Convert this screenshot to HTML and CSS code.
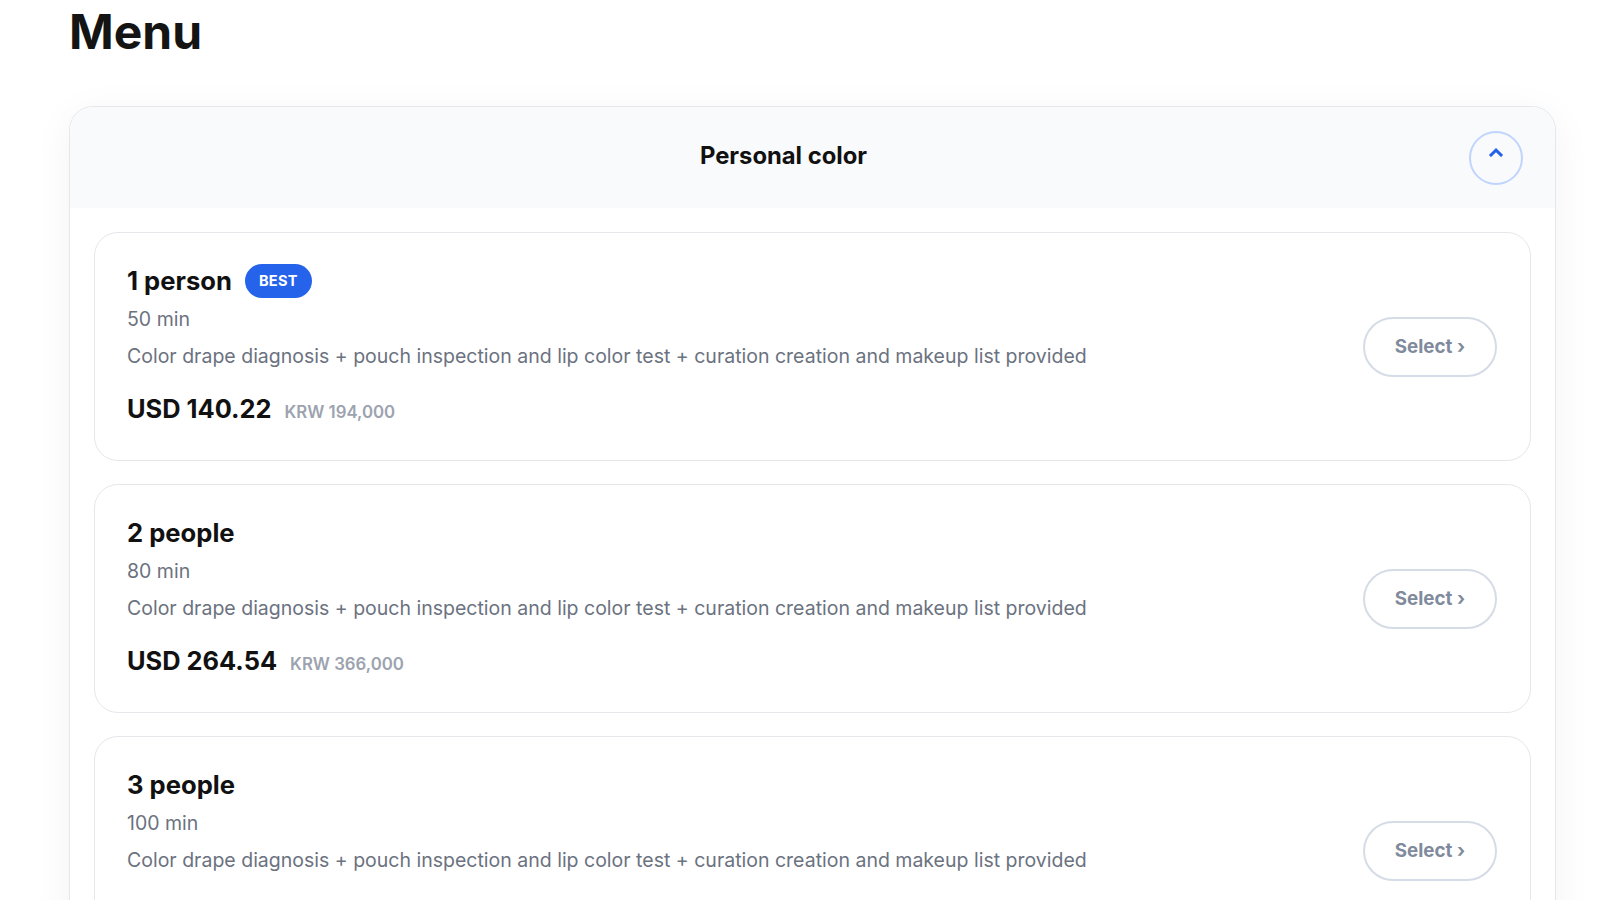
FILE: index.html
```html
<!DOCTYPE html>
<html lang="en">
<head>
<meta charset="utf-8">
<title>Menu</title>
<link rel="stylesheet" href="styles.css">
</head>
<body>
<main class="page">
  <h1 class="page-title">Menu</h1>

  <section class="category">
    <header class="category-head">
      <h2 class="category-title">Personal color</h2>
      <button class="collapse-btn" type="button" aria-label="Collapse">
        <svg width="14" height="9" viewBox="0 0 14 9" aria-hidden="true">
          <polyline points="2,7 7,2.2 12,7" fill="none" stroke="#2563eb" stroke-width="3" stroke-linecap="square" stroke-linejoin="miter"/>
        </svg>
      </button>
    </header>

    <div class="options">
      <article class="option">
        <div class="option-info">
          <div class="option-name-row">
            <h3 class="option-name">1 person</h3>
            <span class="badge">BEST</span>
          </div>
          <p class="option-duration">50 min</p>
          <p class="option-desc">Color drape diagnosis + pouch inspection and lip color test + curation creation and makeup list provided</p>
          <div class="option-price">
            <span class="price-main">USD 140.22</span>
            <span class="price-local">KRW 194,000</span>
          </div>
        </div>
        <button class="select-btn" type="button">Select ›</button>
      </article>

      <article class="option">
        <div class="option-info">
          <div class="option-name-row">
            <h3 class="option-name">2 people</h3>
          </div>
          <p class="option-duration">80 min</p>
          <p class="option-desc">Color drape diagnosis + pouch inspection and lip color test + curation creation and makeup list provided</p>
          <div class="option-price">
            <span class="price-main">USD 264.54</span>
            <span class="price-local">KRW 366,000</span>
          </div>
        </div>
        <button class="select-btn" type="button">Select ›</button>
      </article>

      <article class="option">
        <div class="option-info">
          <div class="option-name-row">
            <h3 class="option-name">3 people</h3>
          </div>
          <p class="option-duration">100 min</p>
          <p class="option-desc">Color drape diagnosis + pouch inspection and lip color test + curation creation and makeup list provided</p>
          <div class="option-price">
            <span class="price-main">USD 376.52</span>
            <span class="price-local">KRW 521,000</span>
          </div>
        </div>
        <button class="select-btn" type="button">Select ›</button>
      </article>
    </div>
  </section>
</main>
</body>
</html>
```

FILE: styles.css
```css
* {
  box-sizing: border-box;
}

html, body {
  margin: 0;
  background: #ffffff;
}

body {
  font-family: Inter, "Noto Sans", Arial, sans-serif;
  color: #111111;
}

.page {
  padding: 3px 44px 40px 69px;
}

.page-title {
  margin: 0 0 45px;
  font-size: 48px;
  line-height: 58px;
  font-weight: 700;
  color: #141414;
}

/* Collapsible category card */
.category {
  border: 1px solid #e5e7eb;
  border-radius: 24px;
  background: #ffffff;
  box-shadow: 0 8px 40px rgba(15, 23, 42, 0.05);
  overflow: hidden;
}

.category-head {
  display: flex;
  align-items: center;
  gap: 4px;
  height: 101px;
  padding: 0 32px;
  background: #f9fafb;
}

.category-title {
  flex: 1;
  margin: 0 0 4px;
  text-align: center;
  font-size: 23.8px;
  line-height: 30px;
  font-weight: 700;
  color: #111111;
}

.collapse-btn {
  display: flex;
  align-items: center;
  justify-content: center;
  width: 54px;
  height: 54px;
  padding: 0 0 10px;
  border: 2px solid #bfd4fe;
  border-radius: 50%;
  background: transparent;
}

.options {
  display: flex;
  flex-direction: column;
  gap: 23px;
  padding: 24px;
}

/* One bookable option */
.option {
  display: flex;
  align-items: center;
  justify-content: space-between;
  padding: 31px 33px 31px 32px;
  border: 1px solid #e5e7eb;
  border-radius: 24px;
  background: #ffffff;
}

.option-name-row {
  display: flex;
  align-items: center;
  gap: 13px;
}

.option-name {
  margin: 0;
  font-size: 25.6px;
  line-height: 34px;
  font-weight: 700;
  color: #111111;
}

.badge {
  display: inline-flex;
  align-items: center;
  height: 34px;
  padding: 0 14px;
  border-radius: 17px;
  background: #2563eb;
  color: #ffffff;
  font-size: 14.6px;
  font-weight: 700;
  letter-spacing: 0.3px;
}

.option-duration {
  margin: 8px 0 0;
  font-size: 19.5px;
  line-height: 27px;
  color: #6b7280;
}

.option-desc {
  margin: 10px 0 0;
  font-size: 19.5px;
  line-height: 27px;
  color: #6b7280;
}

.option-price {
  display: flex;
  align-items: baseline;
  gap: 13px;
  margin-top: 22px;
  line-height: 34px;
}

.price-main {
  font-size: 25.4px;
  font-weight: 700;
  color: #111111;
}

.price-local {
  font-size: 16.8px;
  font-weight: 600;
  color: #9ca3af;
}

.select-btn {
  flex: none;
  height: 60px;
  padding: 0 30px;
  border: 2px solid #d5dce6;
  border-radius: 30px;
  background: #ffffff;
  font-family: inherit;
  font-size: 18.8px;
  font-weight: 700;
  color: #7f8b9c;
}
```
